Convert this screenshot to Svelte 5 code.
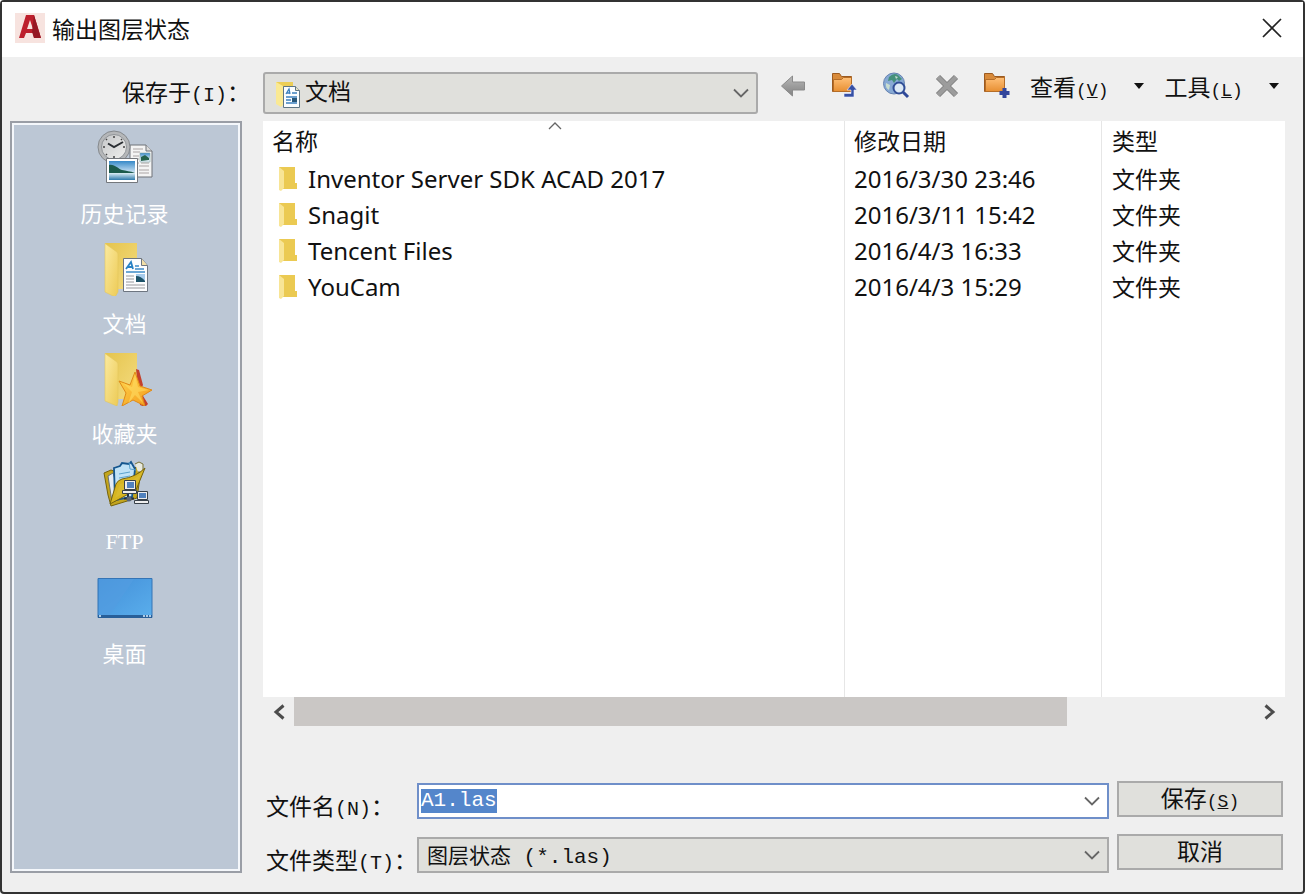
<script lang="ts">
	import { onMount } from 'svelte';

	type Place = { id: string; label: string };
	type Entry = { name: string; modified: string; type: string };

	const places: Place[] = [
		{ id: 'history', label: '历史记录' },
		{ id: 'documents', label: '文档' },
		{ id: 'favorites', label: '收藏夹' },
		{ id: 'ftp', label: 'FTP' },
		{ id: 'desktop', label: '桌面' }
	];

	const entries: Entry[] = [
		{ name: 'Inventor Server SDK ACAD 2017', modified: '2016/3/30 23:46', type: '文件夹' },
		{ name: 'Snagit', modified: '2016/3/11 15:42', type: '文件夹' },
		{ name: 'Tencent Files', modified: '2016/4/3 16:33', type: '文件夹' },
		{ name: 'YouCam', modified: '2016/4/3 15:29', type: '文件夹' }
	];

	let fileName = $state('A1.las');
	let nameInput: HTMLInputElement;

	onMount(() => {
		nameInput.focus();
		nameInput.select();
	});
</script>

<svelte:head>
	<title>输出图层状态</title>
</svelte:head>

{#snippet chevron()}
	<svg class="chevron" width="16" height="10" viewBox="0 0 16 10" aria-hidden="true">
		<path d="M1 1.5 8 8.5 15 1.5" fill="none" stroke="#666" stroke-width="1.8" />
	</svg>
{/snippet}

{#snippet caret()}
	<svg width="10" height="6" viewBox="0 0 10 6" aria-hidden="true">
		<path d="M0 0h10L5 6z" fill="#111" />
	</svg>
{/snippet}

{#snippet placeIcon(id: string)}
	<svg width="56" height="56" viewBox="0 0 56 56" aria-hidden="true">
		{#if id === 'history'}
			<path d="M33 15h16l6 6v26H33z" fill="#f4f4f4" stroke="#6e7278" />
			<path d="M49 15v6h6" fill="#dcdcdc" stroke="#6e7278" />
			<path d="M36 19h10M36 22h7M36 26h6M36 29h6M36 33h6M42 36h10M42 40h10M42 43h10M44 33h8" stroke="#aaa4a4" />
			<path d="M43 23h10v9H43z" fill="url(#sky)" stroke="#8aa" stroke-width=".6" />
			<path d="M44 31v-4l4-2 4 3v2z" fill="#25624c" />
			<circle cx="17" cy="17" r="16" fill="#b5b7b9" stroke="#85898d" />
			<circle cx="17" cy="17" r="12.5" fill="url(#dial)" stroke="#909498" />
			<path d="M17 6v2M17 26v2M6 17h2M26 17h2M9 9l1 1M25 9l-1 1M9 25l1-1" stroke="#444" stroke-width="1.5" />
			<path d="M11 13.5 17 17l9-5" fill="none" stroke="#2b2f33" stroke-width="2" />
			<path d="M9.5 28.5h31v24h-31z" fill="#fff" stroke="#73777c" />
			<path d="M12 31h26v19H12z" fill="url(#sky)" />
			<path d="M12 35c6-1 9 4 13 5s8 1 13 3v1H12z" fill="#1c5a4b" />
			<path d="M12 43h26v7H12z" fill="url(#sea)" />
		{:else if id === 'documents'}
			<path d="M8 3h32v46H18z" fill="url(#foldBack)" />
			<path d="M8 3.5 20 12q1 1 1 3v37l-3 5-10-5z" fill="url(#foldFront)" stroke="#e3c65c" stroke-width=".6" />
			<path d="M26.5 18.5h18l6 7v26h-24z" fill="#fcfdfe" stroke="#6d7580" />
			<path d="M44.5 18.5v7h6" fill="#f3dfa6" stroke="#6d7580" />
			<path d="m29 29 5-7 2 7m-5-2h4" fill="none" stroke="#2781c4" stroke-width="1.8" />
			<path d="M38 26h4M38 29h9M29 32h19" stroke="#3d8bc8" stroke-width="1.5" />
			<path d="M29 36h8M29 39h8M29 42h8M29 45h19M29 48h19" stroke="#98989c" />
			<path d="M39 34h9v8h-9z" fill="#a6cbec" />
			<path d="M39 36q5 0 9 5v1h-9z" fill="#1d5268" />
		{:else if id === 'favorites'}
			<path d="M8 3h32v46H18z" fill="url(#foldBack)" />
			<path d="M8 3.5 20 12q1 1 1 3v37l-1 4-12-5z" fill="url(#foldFront)" stroke="#e3c65c" stroke-width=".6" />
			<path d="m39 19 3 1 4 15-3 6 8 13-3 3-5-2z" fill="#c3402c" />
			<path d="m38 22 5 14 12 4-10 6 3 10-12-6-11 6 4-13-7-12 11 4z" fill="url(#star)" stroke="#e08a17" />
			<path d="m38 25-3 12-9-4 9 9-4 12 7-9 8 8-5-11 11-2-11-3z" fill="#ffe066" opacity=".55" />
		{:else if id === 'ftp'}
			<path d="m7 13 7-3 8 3 18-6 4 3-4 28-26 8-3-11z" fill="#c3a51d" stroke="#76630c" />
			<path d="m11 16 5-3 8 26-9 3z" fill="#e4ecf3" stroke="#6b7073" />
			<path d="m17 8 6-2 2-3 7 1 2-2 4 7-3 28-17 3z" fill="#c0e2f6" stroke="#15568e" stroke-width="1.8" />
			<path d="m32 2 1 7 6 1M22 14l11-2M22 18l11-2M22 22l9-2" fill="none" stroke="#5ba2cd" />
			<path d="m38 4 4-2 4 2v8h-5" fill="#e8eadf" stroke="#767136" />
			<path d="m48 8-9 22-26 14 6-20q2-4 6-5 14-2 23-11z" fill="#d6b521" stroke="#75620a" />
			<path d="m46 11-8 15-20 12 5-14q14-2 23-13z" fill="#d9bb2d" />
			<path d="M27.5 20.5h11v9h-11zM25.5 30.5h14v3h-14zM40.5 31.500h10v8h-10zM37.5 40.5h14v3h-14z" fill="#eee" stroke="#384149" />
			<path d="M30 22h7v6h-7zM42 33h7v5h-7z" fill="#5182be" />
			<path d="M31 34v7M27 38.5h10" stroke="#222f46" stroke-width="2" />
			<circle cx="32" cy="39" r="2.5" fill="#5b6675" />
		{:else}
			<path d="M1 8.5h54v39H1z" fill="url(#screen)" stroke="#3474b5" />
			<path d="M2 9h35L13 45H2z" fill="#539ce0" opacity=".65" />
			<path d="M1 45h54v3H1z" fill="#285f99" />
			<path d="M2 46h2M46 46h2M49 46h2M52 46h2" stroke="#d9efff" stroke-width="1.5" />
		{/if}
	</svg>
{/snippet}

<svg class="defs" width="0" height="0" aria-hidden="true">
	<defs>
		<linearGradient id="sky" x2="0" y2="1"><stop stop-color="#3689c8" /><stop offset=".7" stop-color="#e5f2fb" /></linearGradient>
		<linearGradient id="sea" x2="0" y2="1"><stop stop-color="#dceef5" /><stop offset="1" stop-color="#2d79aa" /></linearGradient>
		<linearGradient id="dial" x2="1" y2="1"><stop stop-color="#c4c6c8" /><stop offset="1" stop-color="#f0f0ee" /></linearGradient>
		<linearGradient id="foldBack" x2="1" y2="1"><stop stop-color="#e5c44d" /><stop offset="1" stop-color="#f4dc80" /></linearGradient>
		<linearGradient id="foldFront" x2="1" y2="1"><stop stop-color="#fbeaa0" /><stop offset="1" stop-color="#edcb56" /></linearGradient>
		<linearGradient id="star" x2="1" y2="1"><stop stop-color="#ffd64f" /><stop offset="1" stop-color="#f39a1b" /></linearGradient>
		<linearGradient id="screen" x2="1" y2="1"><stop stop-color="#438fd8" /><stop offset="1" stop-color="#5aaeec" /></linearGradient>
		<linearGradient id="orange" x2="0" y2="1"><stop stop-color="#ffc078" /><stop offset="1" stop-color="#e78f32" /></linearGradient>
		<linearGradient id="gray" x2="0" y2="1"><stop stop-color="#b8b8b8" /><stop offset="1" stop-color="#828282" /></linearGradient>
	</defs>
</svg>

<main class="dialog">
	<header class="titlebar">
		<svg width="30" height="30" viewBox="0 0 30 30" aria-hidden="true">
			<path d="M0 0h30v30H0z" fill="#f7e3df" />
			<path d="M11 2h8l7 23h-7l-1-5h-7l-2 5H4zM15 7l-3 9h6z" fill="#bd1f2c" />
			<path d="m19 2 7 23h-7l-2-6z" fill="#951824" />
		</svg>
		<h1>输出图层状态</h1>
		<button class="close" type="button" aria-label="关闭">
			<svg width="20" height="20" viewBox="0 0 20 20" aria-hidden="true">
				<path d="m1 1 18 18M19 1 1 19" stroke="#222" stroke-width="1.7" />
			</svg>
		</button>
	</header>

	<div class="body">
		<label class="look-label" for="lookIn">保存于<span class="latin">(I)</span>：</label>

		<div class="top-row">
			<div class="combo look-in">
				<svg class="combo-icon" width="24" height="28" viewBox="0 0 24 28" aria-hidden="true">
					<path d="M0 2h17v22H4z" fill="#ecce56" />
					<path d="m0 2 7 4v19l-2 2-5-3z" fill="#fae993" />
					<path d="M7.5 6.5h12l4 4v17h-16z" fill="#fafdff" stroke="#5e7584" />
					<path d="M19.5 6.5v4h4" fill="#e8e2c4" stroke="#5e7584" />
					<path d="m10 14 3-5 1 5m-3-1h3M16 13h5M10 17h11M10 20h5M10 23h11" fill="none" stroke="#3c80be" stroke-width="1.3" />
					<path d="M16 18h5v4h-5z" fill="#275679" />
				</svg>
				<select id="lookIn"><option>文档</option></select>
				{@render chevron()}
			</div>

			<div class="toolbar">
				<button type="button" aria-label="后退">
					<svg width="28" height="28" viewBox="0 0 28 28" aria-hidden="true">
						<path d="m1.5 14 11-10v6h12v8h-12v6z" fill="url(#gray)" stroke="#8b8b8b" />
					</svg>
				</button>
				<button type="button" aria-label="上一级">
					<svg width="28" height="28" viewBox="0 0 28 28" aria-hidden="true">
						<path d="M1.5 1.5h7l2 3h10v15h-19z" fill="#d88a3a" stroke="#9c5a20" />
						<path d="M2.5 7.5h8l2-2h8v14h-18z" fill="url(#orange)" stroke="#b56d27" />
						<path d="M13 21.5h7V18h-4l5-6 5 6h-3v7H13z" fill="#3650a5" stroke="#eef" stroke-width=".6" />
					</svg>
				</button>
				<button type="button" aria-label="搜索 Web">
					<svg width="28" height="28" viewBox="0 0 28 28" aria-hidden="true">
						<circle cx="12" cy="11.5" r="10.5" fill="#87a9d4" stroke="#6482b0" />
						<path d="M7 5q5-5 9-2l4 4-3 2-2-2-3 4-2-3-4 1z" fill="#45917b" />
						<path d="m4 11 4 2-1 5q-4-2-3-7zM13 4l3 1-2 2z" fill="#c8ddd1" />
						<circle cx="17" cy="16" r="5.5" fill="#dce9f5" stroke="#304d96" stroke-width="2" />
						<path d="m21 20 5 5" stroke="#304999" stroke-width="3" />
					</svg>
				</button>
				<button type="button" aria-label="删除">
					<svg width="28" height="28" viewBox="0 0 28 28" aria-hidden="true">
						<path d="m5 5 18 18M23 5 5 23" stroke="#828282" stroke-width="6" />
						<path d="m5 5 18 18M23 5 5 23" stroke="#9c9c9c" stroke-width="4" />
					</svg>
				</button>
				<button type="button" aria-label="创建新文件夹">
					<svg width="28" height="28" viewBox="0 0 28 28" aria-hidden="true">
						<path d="M.5 1.5h8l2 3h10v15H.5z" fill="#d88a3a" stroke="#9c5a20" />
						<path d="M1.5 7.5h9l2-2h8v14h-19z" fill="url(#orange)" stroke="#b56d27" />
						<path d="M20.5 16v10M15.5 21h10" stroke="#33469c" stroke-width="4" />
					</svg>
				</button>
				<button class="menu" type="button">
					<span>查看<span class="latin">(<u>V</u>)</span></span>
					{@render caret()}
				</button>
				<button class="menu" type="button">
					<span>工具<span class="latin">(<u>L</u>)</span></span>
					{@render caret()}
				</button>
			</div>
		</div>

		<nav class="places">
			{#each places as place}
				<button class="place" type="button">
					{@render placeIcon(place.id)}
					<span class:serif={place.id === 'ftp'}>{place.label}</span>
				</button>
			{/each}
		</nav>

		<div class="content">
			<div class="list">
				<table>
					<thead>
						<tr>
							<th class="name" scope="col">
								名称
								<svg class="sort" width="14" height="8" viewBox="0 0 14 8" aria-hidden="true">
									<path d="m1 7 6-6 6 6" fill="none" stroke="#666" stroke-width="1.3" />
								</svg>
							</th>
							<th class="modified" scope="col">修改日期</th>
							<th class="type" scope="col">类型</th>
						</tr>
					</thead>
					<tbody>
						{#each entries as entry}
							<tr>
								<td class="name">
									<span class="entry">
										<svg width="20" height="26" viewBox="0 0 20 26" aria-hidden="true">
											<path d="M1 1h16v16h2v6H4z" fill="#ebca52" />
											<path d="m1 1 5 4v17l-3 3-2-1z" fill="#f8e596" />
										</svg>
										{entry.name}
									</span>
								</td>
								<td class="date">{entry.modified}</td>
								<td class="type">{entry.type}</td>
							</tr>
						{/each}
						<tr class="rest"><td></td><td></td><td></td></tr>
					</tbody>
				</table>
			</div>

			<div class="scrollbar">
				<button type="button" aria-label="向左滚动">
					<svg width="12" height="16" viewBox="0 0 12 16" aria-hidden="true">
						<path d="M10.5 1.5 3 8l7.5 6.5" fill="none" stroke="#4c4c4c" stroke-width="3" />
					</svg>
				</button>
				<div class="track"><div class="thumb"></div></div>
				<button type="button" aria-label="向右滚动">
					<svg width="12" height="16" viewBox="0 0 12 16" aria-hidden="true">
						<path d="M1.5 1.5 9 8l-7.5 6.5" fill="none" stroke="#4c4c4c" stroke-width="3" />
					</svg>
				</button>
			</div>

			<form class="footer" onsubmit={(event) => event.preventDefault()}>
				<div class="fields">
					<label for="fileName">文件名<span class="latin">(N)</span>：</label>
					<div class="combo file-name">
						<input id="fileName" type="text" bind:this={nameInput} bind:value={fileName} />
						{@render chevron()}
					</div>
					<label for="fileType">文件类型<span class="latin">(T)</span>：</label>
					<div class="combo file-type">
						<select id="fileType"><option>图层状态 (*.las)</option></select>
						{@render chevron()}
					</div>
				</div>
				<div class="actions">
					<button type="submit">保存<span class="latin">(<u>S</u>)</span></button>
					<button type="button">取消</button>
				</div>
			</form>
		</div>
	</div>
</main>

<style>
	:global(body) {
		background: #fff;
	}

	.defs {
		position: absolute;
	}

	.dialog {
		display: flex;
		flex-direction: column;
		box-sizing: border-box;
		min-height: 100vh;
		border: 2px solid #333;
		border-radius: 4px;
		background: #efefef;
		color: #111;
		font-family: 'Noto Sans CJK SC', sans-serif;
		font-size: 23px;
		line-height: 32px;
	}

	.latin {
		font-family: 'Liberation Mono', monospace;
		font-size: 20px;
		line-height: 1;
	}

	button .latin {
		font-size: 18px;
	}

	.serif {
		font-family: 'Liberation Serif', serif;
	}

	button,
	select,
	input {
		margin: 0;
		padding: 0;
		border: 0;
		background: none;
		color: inherit;
		font: inherit;
	}

	svg {
		flex: none;
		display: block;
	}

	.titlebar {
		display: flex;
		align-items: center;
		gap: 7px;
		box-sizing: border-box;
		height: 55px;
		padding: 0 21px 3px 13px;
		background: #fff;
	}

	h1 {
		flex: 1;
		margin: 0;
		font-size: 23px;
		font-weight: 400;
	}

	.body {
		flex: 1;
		display: grid;
		grid-template-columns: 232px minmax(0, 1fr);
		grid-template-rows: 49px 1fr;
		column-gap: 21px;
		padding: 15px 18px 19px 8px;
	}

	.look-label {
		padding-left: 112px;
		line-height: 38px;
		white-space: nowrap;
	}

	.top-row {
		display: flex;
		align-items: flex-start;
		gap: 22px;
	}

	.combo {
		position: relative;
		display: flex;
		box-sizing: border-box;
		border: 2px solid #aaa;
		background: #e0e0dc;
	}

	.combo select,
	.combo input {
		flex: 1;
		min-width: 0;
		padding-right: 36px;
		appearance: none;
		outline: none;
	}

	.combo .chevron {
		position: absolute;
		top: 50%;
		right: 7px;
		margin-top: -5px;
		pointer-events: none;
	}

	.look-in {
		flex: 0 1 495px;
		height: 42px;
		border-radius: 3px;
	}

	.look-in select {
		padding-left: 40px;
		padding-bottom: 9px;
	}

	.combo-icon {
		position: absolute;
		top: 6px;
		left: 11px;
		pointer-events: none;
	}

	.toolbar {
		display: flex;
		align-items: center;
		gap: 23px;
		line-height: 28px;
	}

	.menu {
		display: flex;
		align-items: center;
		gap: 26px;
		margin-left: -5px;
		white-space: nowrap;
	}

	.menu + .menu {
		margin-left: -3px;
	}

	.places {
		box-sizing: border-box;
		display: flex;
		flex-direction: column;
		padding-right: 3px;
		border: 2px solid #9a9ea6;
		background: #bcc7d5;
		box-shadow: inset 0 0 0 2px #f4f7fb;
	}

	.place {
		display: flex;
		flex-direction: column;
		align-items: center;
		gap: 10px;
		height: 110px;
		padding-top: 7px;
		box-sizing: border-box;
		color: #fff;
		font-size: 22px;
	}

	.content {
		display: flex;
		flex-direction: column;
	}

	.list {
		flex: 1;
		display: flex;
		background: #fff;
	}

	table {
		width: 100%;
		table-layout: fixed;
		border-collapse: collapse;
		font-family: 'Noto Sans', 'Noto Sans CJK SC', sans-serif;
	}

	th,
	td {
		height: 36px;
		padding: 0 0 0 9px;
		text-align: left;
		font-weight: 400;
		white-space: nowrap;
	}

	th {
		height: 40px;
	}

	th + th,
	td + td {
		border-left: 1px solid #e6e6e6;
	}

	th.name {
		position: relative;
	}

	th.modified {
		width: 247px;
	}

	th.type {
		width: 173px;
	}

	.type {
		padding-left: 10px;
	}

	td.name {
		padding-left: 15px;
	}

	.entry,
	.date {
		font-size: 24px;
	}

	.sort {
		position: absolute;
		top: 1px;
		left: 50%;
		margin-left: -6px;
	}

	.entry {
		display: flex;
		align-items: center;
		gap: 10px;
	}

	.rest td {
		height: auto;
	}

	.scrollbar {
		display: flex;
		height: 29px;
	}

	.scrollbar button {
		display: flex;
		align-items: center;
		justify-content: center;
		width: 31px;
	}

	.track {
		flex: 1;
	}

	.thumb {
		width: 80.5%;
		height: 100%;
		background: #cac7c5;
	}

	.footer {
		display: flex;
		gap: 8px;
		margin-top: 55px;
		padding-right: 2px;
	}

	.fields {
		flex: 1;
		display: grid;
		grid-template-columns: 151px minmax(0, 1fr);
		grid-auto-rows: 36px;
		row-gap: 18px;
		padding: 2px 0 0 3px;
	}

	.fields label {
		padding-top: 6px;
		white-space: nowrap;
	}

	.file-name {
		border-color: #6f8fc9;
		background: #fff;
	}

	.file-name input {
		padding-left: 2px;
		font-family: 'Liberation Mono', monospace;
		font-size: 21px;
		line-height: 24px;
	}

	.file-name input::selection {
		background: #5486cb;
		color: #fff;
	}

	.file-type select {
		padding-top: 3px;
		padding-left: 8px;
		font-family: 'Liberation Mono', 'Noto Sans CJK SC', monospace;
		font-size: 21px;
	}

	.actions {
		display: flex;
		flex-direction: column;
		gap: 17px;
		width: 166px;
	}

	.actions button {
		box-sizing: border-box;
		height: 36px;
		padding-bottom: 4px;
		border: 2px solid #aaa;
		background: #e0e0dc;
		line-height: 28px;
	}
</style>
